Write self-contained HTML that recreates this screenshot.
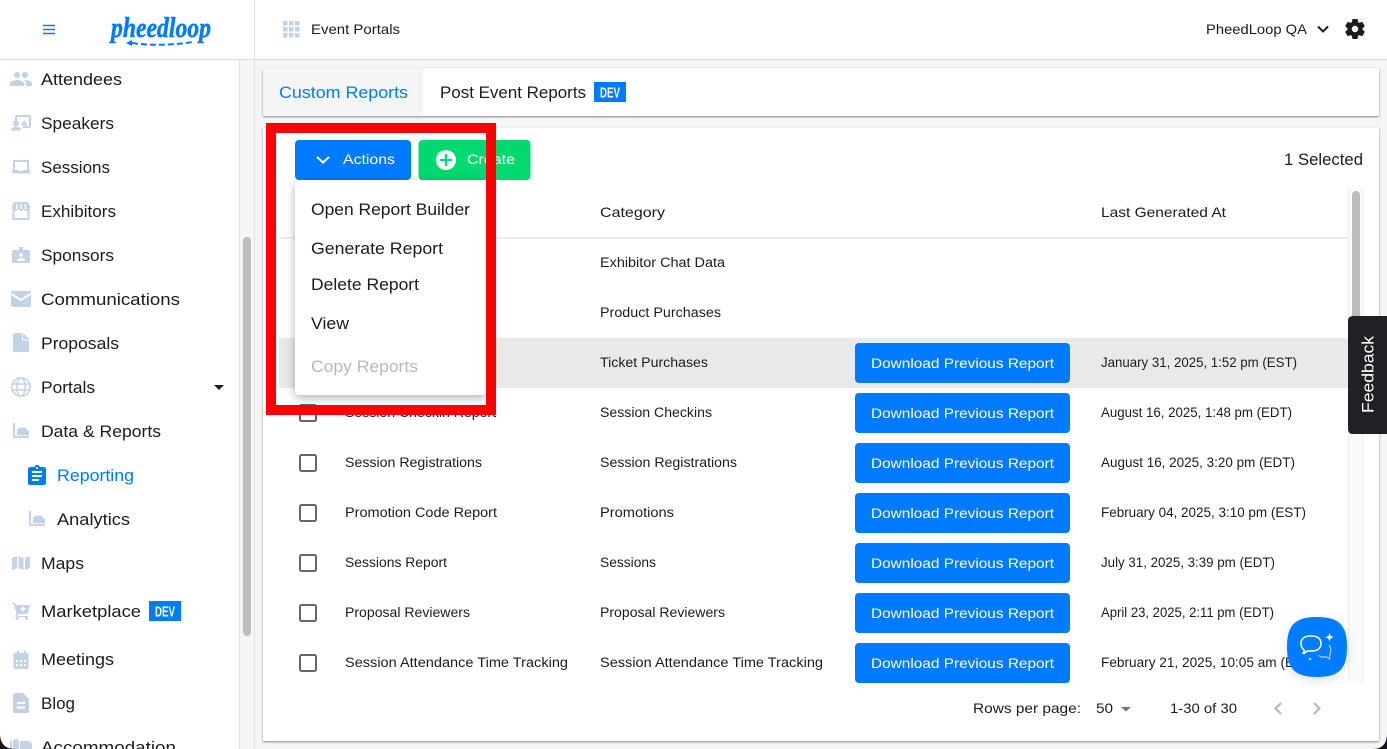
<!DOCTYPE html>
<html lang="en"><head><meta charset="utf-8"><title>Event Portals - Reports</title>
<style>
html,body{margin:0;padding:0;width:1387px;height:749px;overflow:hidden;background:#f5f5f5}
svg{display:block;font-family:"Liberation Sans",sans-serif}
text{fill:#1c1c1c}
.n{font-size:16.5px}
.m{font-size:14px}
.t{font-size:13.5px}
.b{fill:#fff;font-size:14px}
.i{fill:#c3d2e6}
.k{fill:none;stroke:#c3d2e6;stroke-width:2}
.d{fill:#fff;font-size:14.5px;font-weight:bold}
.r{fill:#007bff}
.cb{fill:#fff;stroke:#666;stroke-width:2}
</style></head><body>
<svg width="1387" height="749" viewBox="0 0 1387 749" xmlns="http://www.w3.org/2000/svg">
<defs>
<filter id="sh" x="-2%" y="-10%" width="104%" height="120%"><feDropShadow dx="0" dy="1" stdDeviation="1" flood-color="#000" flood-opacity=".45"/></filter>
<filter id="ms" x="-15%" y="-10%" width="130%" height="120%"><feDropShadow dx="0" dy="3" stdDeviation="5" flood-color="#000" flood-opacity=".3"/></filter>
<filter id="cs" x="-30%" y="-30%" width="160%" height="160%"><feDropShadow dx="0" dy="3" stdDeviation="5" flood-color="#000" flood-opacity=".12"/></filter>
<clipPath id="tc"><rect x="263" y="128" width="1085" height="555"/></clipPath>
</defs>
<rect width="1387" height="749" fill="#f5f5f5"/>

<!-- sidebar -->
<rect x="0" y="60" width="239" height="689" fill="#fff"/>
<rect x="239" y="60" width="1" height="689" fill="#e2e2e2"/>
<rect x="243" y="237" width="8" height="399" rx="4" fill="#bdbdbd"/>
<rect x="254" y="0" width="1" height="749" fill="#e2e2e2"/>

<!-- header -->
<rect x="0" y="0" width="1387" height="59" fill="#fff"/>
<rect x="254" y="0" width="1" height="59" fill="#e2e2e2"/>
<rect x="0" y="59" width="1387" height="1" fill="#dcdcdc"/>
<path d="M43 25.5h12M43 29.5h12M43 33.5h12" stroke="#007bff" stroke-width="1.5"/>
<text x="111" y="37" font-family="Liberation Serif" font-style="italic" font-weight="bold" font-size="29" textLength="100" lengthAdjust="spacingAndGlyphs" style="fill:#007bff;stroke:#007bff;stroke-width:.5">pheedloop</text>
<path d="M132 43Q160 47 193 42" fill="none" stroke="#007bff" stroke-width="2" stroke-dasharray="6 3"/>
<path d="M126 43l6-3v6z" fill="#007bff"/>
<g class="i">
<rect x="283" y="21" width="4.500" height="4.500"/><rect x="289" y="21" width="4.500" height="4.500"/><rect x="295" y="21" width="4.500" height="4.500"/>
<rect x="283" y="27" width="4.500" height="4.500"/><rect x="289" y="27" width="4.500" height="4.500"/><rect x="295" y="27" width="4.500" height="4.500"/>
<rect x="283" y="33" width="4.500" height="4.500"/><rect x="289" y="33" width="4.500" height="4.500"/><rect x="295" y="33" width="4.500" height="4.500"/>
</g>
<text class="m" x="311" y="34" textLength="89" lengthAdjust="spacingAndGlyphs">Event Portals</text>
<text class="m" x="1206" y="34" textLength="101" lengthAdjust="spacingAndGlyphs">PheedLoop QA</text>
<path d="M1318 26.500l5 5 5-5" fill="none" stroke="#1c1c1c" stroke-width="2"/>
<path transform="translate(1343 17)" fill="#1c1c1c" stroke="#1c1c1c" stroke-width=".7" d="M19.140 12.940c.04-.3.06-.61.06-.94 0-.32-.02-.64-.07-.94l2.030-1.580a.49.49 0 00.12-.61l-1.920-3.320a.488.488 0 00-.59-.22l-2.390.96c-.5-.38-1.030-.7-1.620-.94l-.36-2.540a.484.484 0 00-.48-.41h-3.840c-.24 0-.43.17-.47.41l-.36 2.540c-.59.24-1.130.57-1.620.94l-2.390-.96c-.22-.08-.47 0-.59.22L2.740 8.870c-.12.21-.08.47.12.61l2.030 1.580c-.05.3-.09.63-.09.94s.02.64.07.94l-2.030 1.580a.49.49 0 00-.12.61l1.920 3.320c.12.22.37.29.59.22l2.390-.96c.5.38 1.030.7 1.620.94l.36 2.540c.05.24.24.41.48.41h3.840c.24 0 .44-.17.47-.41l.36-2.540c.59-.24 1.130-.56 1.620-.94l2.390.96c.22.08.47 0 .59-.22l1.920-3.320c.12-.22.07-.47-.12-.61l-2.010-1.580zM12 15.600c-1.980 0-3.600-1.620-3.600-3.600s1.620-3.600 3.600-3.600 3.600 1.620 3.600 3.600-1.620 3.600-3.600 3.600z"/>

<!-- sidebar icons -->
<path class="i" transform="translate(9 67)" d="M16 11c1.660 0 2.990-1.340 2.990-3S17.660 5 16 5c-1.660 0-3 1.340-3 3s1.340 3 3 3zm-8 0c1.660 0 2.990-1.340 2.990-3S9.660 5 8 5C6.340 5 5 6.340 5 8s1.340 3 3 3zm0 2c-2.330 0-7 1.170-7 3.500V19h14v-2.500c0-2.330-4.670-3.500-7-3.500zm8 0c-.29 0-.62.02-.97.05 1.160.84 1.970 1.970 1.970 3.450V19h6v-2.500c0-2.330-4.670-3.500-7-3.500z"/>
<path class="k" d="M16 121v-3.500q0-1.500 1.500-1.500h11q1.500 0 1.500 1.500v8q0 1.500-1.500 1.500H23"/>
<path class="i" d="M21 124l4-4v2.500h2v3h-5zM11 130.500q0-3.500 5-3.500t5 3.500z"/><circle class="i" cx="16" cy="123.500" r="3"/>
<path class="k" d="M14 171v-10h14v10"/><path class="i" d="M12 170h7v1h4v-1h7v1.500q0 2-2 2H14q-2 0-2-2z"/>
<path class="k" d="M13.500 209v10h15v-10"/>
<path class="i" d="M15 202h12q1.500 0 2 1.500l1 3.500v1q0 3-3 3t-3-2.500q-1 2.500-3 2.500t-3-2.500q-1 2.500-3 2.500t-3-3v-1l1-3.500q.5-1.500 2-1.500z"/>
<path d="M17 204l-.7 5M21 204v5M25 204l.7 5" stroke="#fff" stroke-width="1.300"/>
<path class="i" d="M14 250h5v-3h4v3h5q2 0 2 2v9q0 2-2 2H14q-2 0-2-2v-9q0-2 2-2z"/><circle cx="21" cy="255" r="1.800" fill="#fff"/><path d="M17 261q0-3 4-3t4 3z" fill="#fff"/>
<path class="i" d="M13 291h16q2 0 2 2v12q0 2-2 2H13q-2 0-2-2v-12q0-2 2-2z"/><path d="M11.500 294l9.500 6 9.500-6" fill="none" stroke="#fff" stroke-width="2"/>
<path class="i" d="M15 333h8l6 6v11q0 2-2 2H15q-2 0-2-2v-15q0-2 2-2z"/><path d="M22.500 333v7h6.500" fill="none" stroke="#fff" stroke-width="1"/>
<g fill="none" stroke="#c3d2e6" stroke-width="1.500"><circle cx="21" cy="387" r="9.200"/><ellipse cx="21" cy="387" rx="4.200" ry="9.200"/><path d="M12 384h18M12 390h18"/></g>
<path class="k" d="M14 423v14h15"/><path class="i" d="M17 435v-5l3-3 2 1.500 2-1.500 3 2.500 2 1.500v4.500z"/>
<path class="r" transform="translate(25 464)" d="M19 3h-4.180C14.400 1.840 13.300 1 12 1c-1.300 0-2.400.84-2.820 2H5c-1.100 0-2 .9-2 2v14c0 1.100.9 2 2 2h14c1.100 0 2-.9 2-2V5c0-1.100-.9-2-2-2zm-7 0c.55 0 1 .45 1 1s-.45 1-1 1-1-.45-1-1 .45-1 1-1zm2 14H7v-2h7v2zm3-4H7v-2h10v2zm0-4H7V7h10v2z"/>
<path class="k" d="M30 511v14h15"/><path class="i" d="M33 523v-5l3-3 2 1.500 2-1.500 3 2.500 2 1.500v4.500z"/>
<path class="i" d="M12 558l5-2v12l-5 2zM18.500 556l5 2v12l-5-2zM25 558l5-2v12l-5 2z"/>
<path class="i" d="M12 603h3l1 2h14l-2.500 9H18l-1 2h11v1H15l1.500-3.500L14 604h-2z"/><path d="M20.500 609h5M23 606.500v5" stroke="#fff" stroke-width="1.500"/><circle class="i" cx="17.500" cy="618.500" r="1.500"/><circle class="i" cx="26.500" cy="618.500" r="1.500"/>
<path class="i" fill-rule="evenodd" d="M17 651h2v2h5v-2h2v2h1q1.500 0 1.500 1.500V667.500q0 1.500-1.500 1.500H15q-1.500 0-1.500-1.500V654.500q0-1.500 1.500-1.500h2zM16 660v2h2v-2zM20 660v2h2v-2zM24 660v2h2v-2zM16 664v2h2v-2zM20 664v2h2v-2zM24 664v2h2v-2z"/>
<path class="i" fill-rule="evenodd" d="M15 693h8l6 6v12q0 2-2 2H15q-2 0-2-2v-16q0-2 2-2zM17 702v2h8v-2zM17 706.500v2h8v-2z"/>
<path class="i" d="M10 741h2v8h-2zM13 742a3 3 0 016 0v7h-6zM20 741h8q4 0 4 5v3H20z"/>

<!-- sidebar labels -->
<text class="n" x="41" y="85" textLength="81" lengthAdjust="spacingAndGlyphs">Attendees</text>
<text class="n" x="41" y="129" textLength="73" lengthAdjust="spacingAndGlyphs">Speakers</text>
<text class="n" x="41" y="173" textLength="69" lengthAdjust="spacingAndGlyphs">Sessions</text>
<text class="n" x="41" y="217" textLength="75" lengthAdjust="spacingAndGlyphs">Exhibitors</text>
<text class="n" x="41" y="261" textLength="73" lengthAdjust="spacingAndGlyphs">Sponsors</text>
<text class="n" x="41" y="305" textLength="139" lengthAdjust="spacingAndGlyphs">Communications</text>
<text class="n" x="41" y="349" textLength="78" lengthAdjust="spacingAndGlyphs">Proposals</text>
<text class="n" x="41" y="393" textLength="54" lengthAdjust="spacingAndGlyphs">Portals</text>
<path d="M214 385h10l-5 5z" fill="#1c1c1c"/>
<text class="n" x="41" y="437" textLength="120" lengthAdjust="spacingAndGlyphs">Data &amp; Reports</text>
<text class="n" x="57" y="481" textLength="77" lengthAdjust="spacingAndGlyphs" style="fill:#007bff">Reporting</text>
<text class="n" x="57" y="525" textLength="73" lengthAdjust="spacingAndGlyphs">Analytics</text>
<text class="n" x="41" y="569" textLength="43" lengthAdjust="spacingAndGlyphs">Maps</text>
<text class="n" x="41" y="617" textLength="100" lengthAdjust="spacingAndGlyphs">Marketplace</text>
<rect x="149" y="601" width="32" height="20" fill="#007bff"/>
<text class="d" x="155" y="616.500" textLength="20" lengthAdjust="spacingAndGlyphs">DEV</text>
<text class="n" x="41" y="665" textLength="73" lengthAdjust="spacingAndGlyphs">Meetings</text>
<text class="n" x="41" y="709" textLength="34" lengthAdjust="spacingAndGlyphs">Blog</text>
<text class="n" x="41" y="753" textLength="135" lengthAdjust="spacingAndGlyphs">Accommodation</text>

<!-- tabs card -->
<rect x="263" y="68" width="1116" height="48" fill="#fff" filter="url(#sh)"/>
<rect x="263" y="68" width="160" height="48" fill="#f5f5f5"/>
<text class="n" x="279" y="98" textLength="129" lengthAdjust="spacingAndGlyphs" style="fill:#007bff">Custom Reports</text>
<text class="n" x="440" y="98" textLength="146" lengthAdjust="spacingAndGlyphs">Post Event Reports</text>
<rect x="594" y="82" width="32" height="20" fill="#007bff"/>
<text class="d" x="600" y="97.500" textLength="20" lengthAdjust="spacingAndGlyphs">DEV</text>

<!-- main card -->
<rect x="263" y="128" width="1116" height="613" fill="#fff" filter="url(#sh)"/>
<text class="n" x="1284" y="165" textLength="79" lengthAdjust="spacingAndGlyphs">1 Selected</text>

<!-- table -->
<text class="m" x="600" y="217" textLength="65" lengthAdjust="spacingAndGlyphs">Category</text>
<text class="m" x="1101" y="217" textLength="125" lengthAdjust="spacingAndGlyphs">Last Generated At</text>
<rect x="279" y="237" width="1069" height="2" fill="#ececec"/>
<rect x="279" y="338" width="1069" height="50" fill="#e9e9e9"/>

<g clip-path="url(#tc)">
<text class="t" x="600" y="267" textLength="125" lengthAdjust="spacingAndGlyphs">Exhibitor Chat Data</text>
<text class="t" x="600" y="317" textLength="121" lengthAdjust="spacingAndGlyphs">Product Purchases</text>
<text class="t" x="600" y="367" textLength="108" lengthAdjust="spacingAndGlyphs">Ticket Purchases</text>
<text class="t" x="600" y="417" textLength="112" lengthAdjust="spacingAndGlyphs">Session Checkins</text>
<text class="t" x="600" y="467" textLength="137" lengthAdjust="spacingAndGlyphs">Session Registrations</text>
<text class="t" x="600" y="517" textLength="74" lengthAdjust="spacingAndGlyphs">Promotions</text>
<text class="t" x="600" y="567" textLength="56" lengthAdjust="spacingAndGlyphs">Sessions</text>
<text class="t" x="600" y="617" textLength="125" lengthAdjust="spacingAndGlyphs">Proposal Reviewers</text>
<text class="t" x="600" y="667" textLength="223" lengthAdjust="spacingAndGlyphs">Session Attendance Time Tracking</text>

<rect class="cb" x="300" y="405" width="16" height="16" rx="1.500"/>
<rect class="cb" x="300" y="455" width="16" height="16" rx="1.500"/>
<rect class="cb" x="300" y="505" width="16" height="16" rx="1.500"/>
<rect class="cb" x="300" y="555" width="16" height="16" rx="1.500"/>
<rect class="cb" x="300" y="605" width="16" height="16" rx="1.500"/>
<rect class="cb" x="300" y="655" width="16" height="16" rx="1.500"/>

<text class="t" x="345" y="417" textLength="151" lengthAdjust="spacingAndGlyphs">Session Checkin Report</text>
<text class="t" x="345" y="467" textLength="137" lengthAdjust="spacingAndGlyphs">Session Registrations</text>
<text class="t" x="345" y="517" textLength="152" lengthAdjust="spacingAndGlyphs">Promotion Code Report</text>
<text class="t" x="345" y="567" textLength="102" lengthAdjust="spacingAndGlyphs">Sessions Report</text>
<text class="t" x="345" y="617" textLength="125" lengthAdjust="spacingAndGlyphs">Proposal Reviewers</text>
<text class="t" x="345" y="667" textLength="223" lengthAdjust="spacingAndGlyphs">Session Attendance Time Tracking</text>

<rect class="r" x="855" y="343" width="215" height="40" rx="4"/>
<rect class="r" x="855" y="393" width="215" height="40" rx="4"/>
<rect class="r" x="855" y="443" width="215" height="40" rx="4"/>
<rect class="r" x="855" y="493" width="215" height="40" rx="4"/>
<rect class="r" x="855" y="543" width="215" height="40" rx="4"/>
<rect class="r" x="855" y="593" width="215" height="40" rx="4"/>
<rect class="r" x="855" y="643" width="215" height="40" rx="4"/>
<text class="b" x="871" y="368" textLength="183" lengthAdjust="spacingAndGlyphs">Download Previous Report</text>
<text class="b" x="871" y="418" textLength="183" lengthAdjust="spacingAndGlyphs">Download Previous Report</text>
<text class="b" x="871" y="468" textLength="183" lengthAdjust="spacingAndGlyphs">Download Previous Report</text>
<text class="b" x="871" y="518" textLength="183" lengthAdjust="spacingAndGlyphs">Download Previous Report</text>
<text class="b" x="871" y="568" textLength="183" lengthAdjust="spacingAndGlyphs">Download Previous Report</text>
<text class="b" x="871" y="618" textLength="183" lengthAdjust="spacingAndGlyphs">Download Previous Report</text>
<text class="b" x="871" y="668" textLength="183" lengthAdjust="spacingAndGlyphs">Download Previous Report</text>

<text class="t" x="1101" y="367" textLength="196" lengthAdjust="spacingAndGlyphs" style="font-size:14px">January 31, 2025, 1:52 pm (EST)</text>
<text class="t" x="1101" y="417" textLength="191" lengthAdjust="spacingAndGlyphs" style="font-size:14px">August 16, 2025, 1:48 pm (EDT)</text>
<text class="t" x="1101" y="467" textLength="194" lengthAdjust="spacingAndGlyphs" style="font-size:14px">August 16, 2025, 3:20 pm (EDT)</text>
<text class="t" x="1101" y="517" textLength="205" lengthAdjust="spacingAndGlyphs" style="font-size:14px">February 04, 2025, 3:10 pm (EST)</text>
<text class="t" x="1101" y="567" textLength="174" lengthAdjust="spacingAndGlyphs" style="font-size:14px">July 31, 2025, 3:39 pm (EDT)</text>
<text class="t" x="1101" y="617" textLength="173" lengthAdjust="spacingAndGlyphs" style="font-size:14px">April 23, 2025, 2:11 pm (EDT)</text>
<text class="t" x="1101" y="667" textLength="215" lengthAdjust="spacingAndGlyphs" style="font-size:14px">February 21, 2025, 10:05 am (EST)</text>
</g>

<!-- table scrollbar -->
<rect x="1348" y="188" width="15" height="495" fill="#fafafa"/>
<rect x="1348" y="188" width="1" height="495" fill="#eee"/>
<rect x="1362" y="188" width="1" height="495" fill="#eee"/>
<rect x="1352" y="191" width="8" height="200" rx="4" fill="#bdbdbd"/>

<!-- pagination -->
<text class="m" x="973" y="713" textLength="108" lengthAdjust="spacingAndGlyphs">Rows per page:</text>
<text class="m" x="1096" y="713" textLength="17" lengthAdjust="spacingAndGlyphs">50</text>
<path d="M1121 707h10l-5 4.500z" fill="#757575"/>
<text class="m" x="1170" y="713" textLength="67" lengthAdjust="spacingAndGlyphs">1-30 of 30</text>
<path d="M1281 703l-5.500 5.500 5.500 5.500M1314 703l5.500 5.500-5.500 5.500" fill="none" stroke="#b5b5b5" stroke-width="2"/>

<!-- actions + create -->
<rect class="r" x="295" y="140" width="116" height="40" rx="4"/>
<path d="M317 157l6 5.500 6-5.500" fill="none" stroke="#fff" stroke-width="2"/>
<text class="b" x="343" y="164" textLength="52" lengthAdjust="spacingAndGlyphs">Actions</text>
<rect x="418.500" y="140" width="112" height="40" rx="4" fill="#00d96f"/>
<circle cx="446" cy="160" r="10" fill="#fff"/>
<path d="M440 160h12M446 154v12" stroke="#00d96f" stroke-width="2.200"/>
<text class="b" x="467" y="164" textLength="48" lengthAdjust="spacingAndGlyphs">Create</text>

<!-- dropdown -->
<rect x="295" y="180" width="191" height="215" rx="4" fill="#fff" filter="url(#ms)"/>
<text class="n" x="311" y="215" textLength="159" lengthAdjust="spacingAndGlyphs">Open Report Builder</text>
<text class="n" x="311" y="254" textLength="132" lengthAdjust="spacingAndGlyphs">Generate Report</text>
<text class="n" x="311" y="290" textLength="108" lengthAdjust="spacingAndGlyphs">Delete Report</text>
<text class="n" x="311" y="329" textLength="38" lengthAdjust="spacingAndGlyphs">View</text>
<text class="n" x="311" y="372" textLength="107" lengthAdjust="spacingAndGlyphs" style="fill:#b8b8b8">Copy Reports</text>

<!-- annotation -->
<rect x="271" y="128" width="220" height="282" fill="none" stroke="#ff0000" stroke-width="10"/>

<!-- feedback -->
<path d="M1387 316h-34q-5 0-5 5v108q0 5 5 5h34z" fill="#1f2124"/>
<text transform="translate(1373.500 413) rotate(-90)" x="0" y="0" font-size="16.500" textLength="77" lengthAdjust="spacingAndGlyphs" style="fill:#fff">Feedback</text>

<!-- chat -->
<path d="M1317 617c22 0 30 8 30 30s-8 30-30 30-30-8-30-30 8-30 30-30z" fill="#007bff" filter="url(#cs)"/>
<g fill="none" stroke="#fff">
<path stroke-width="1.500" d="M1303 650l1.500-2.500q-3.500-3-3.500-7 0-6.500 8-7.500h4q8 1 8 7.500 0 6.500-8 7.500h-5.500l-3.500 2.500z" transform="translate(0 3)"/>
<path stroke-width="1.200" stroke-opacity=".7" d="M1329 645q3 4 1 9l-.5 5-3-2h-5l-3-1.500"/>
</g>
<path d="M1329.500 633l1.200 3 3 1.200-3 1.200-1.200 3-1.200-3-3-1.200 3-1.200z" fill="#fff"/>
<circle cx="1310" cy="659" r="1.300" fill="#fff" fill-opacity=".7"/>

<!-- window corners -->
<path d="M0 735Q1 749 15 749H0z" fill="#1b1018"/>
<path d="M1387 735Q1386 749 1373 749H1387z" fill="#14161f"/>
</svg>
</body></html>
